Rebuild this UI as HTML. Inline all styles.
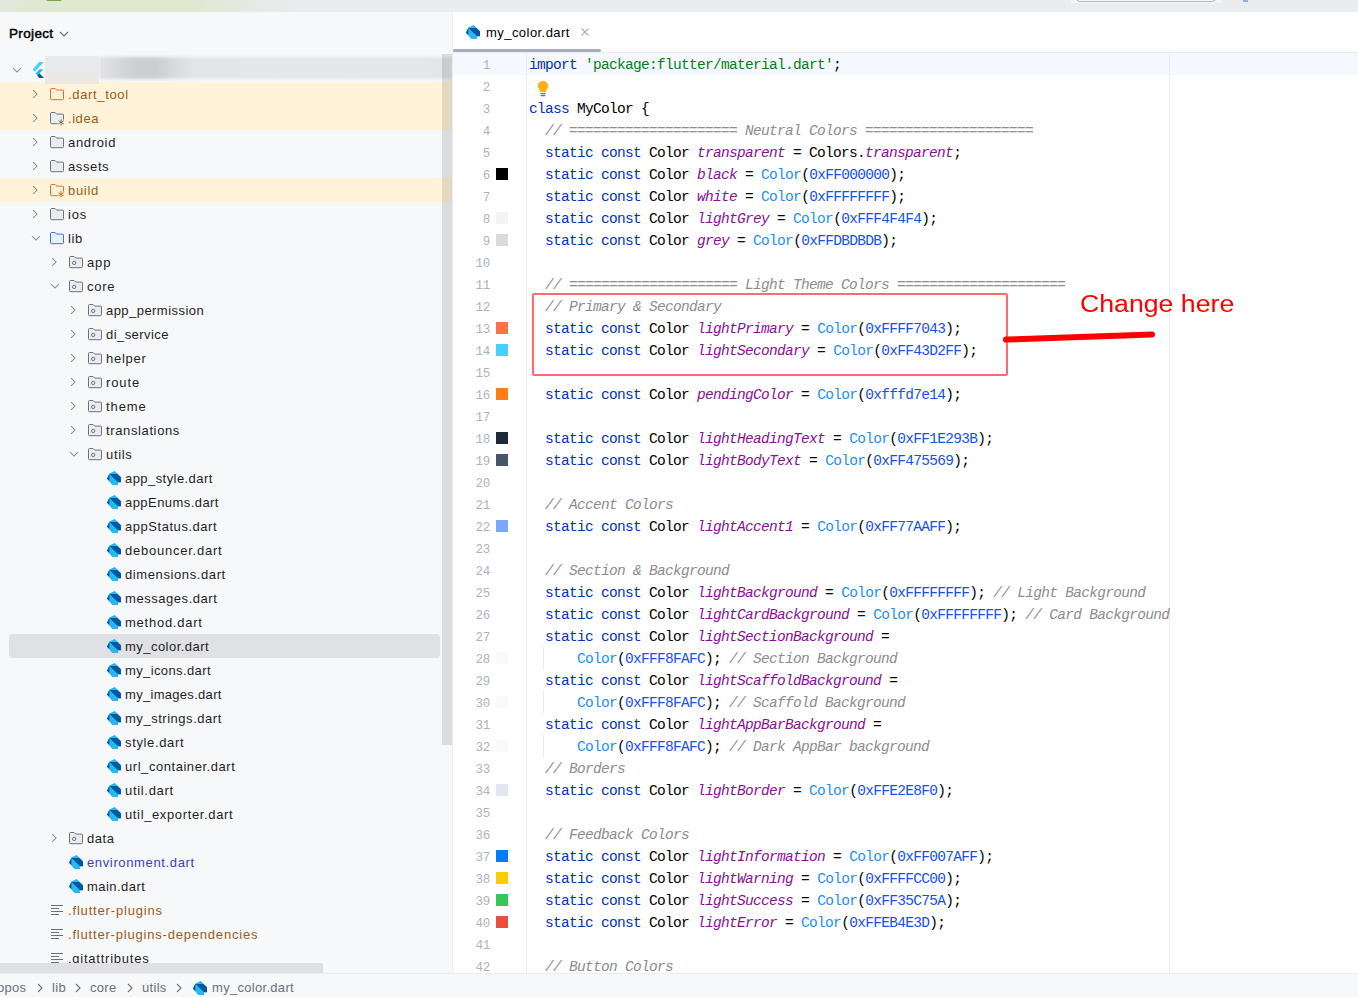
<!DOCTYPE html>
<html><head><meta charset="utf-8"><style>
*{margin:0;padding:0;box-sizing:border-box}
html,body{width:1358px;height:997px;overflow:hidden;background:#fff;font-family:"Liberation Sans",sans-serif;position:relative}
div,svg{position:absolute}
.row{left:0;width:452px;height:24px}
.row.yel{background:#FFF4D9}
.selrow{left:9px;width:431px;height:24px;background:#DFE1E5;border-radius:4px}
.tt{height:24px;line-height:24px;font-size:13px;letter-spacing:0.45px;white-space:nowrap}
.ln{left:529px;height:22px;line-height:22px;font-family:"Liberation Mono",monospace;font-size:14.5px;letter-spacing:-0.7px;white-space:pre;color:#000}
.ln b{font-weight:normal}
.k{color:#0033B3} .s{color:#067D17} .c{color:#8C8C8C;font-style:italic} .f{color:#871094;font-style:italic} .ct{color:#1E8FF0} .n{color:#1750EB}
.num{left:453px;width:37px;text-align:right;height:22px;line-height:22px;font-family:"Liberation Mono",monospace;font-size:12.5px;letter-spacing:-0.3px;color:#AEB3C2}
.sw{left:496px;width:12px;height:12px}
.bc{top:977px;height:22px;line-height:22px;font-size:13px;letter-spacing:0.3px;color:#6C707E;white-space:nowrap}
</style></head><body>
<!-- top toolbar -->
<div style="left:0;top:0;width:1358px;height:12px;background:#EBECF0"></div>
<div style="left:0;top:0;width:320px;height:12px;background:linear-gradient(90deg,#E3E7DF 0px,#DFE8D0 35px,#DFE8D1 190px,#E6EAE4 250px,#EBECF0 310px)"></div>
<div style="left:46px;top:-3px;width:16px;height:4px;background:#7FA34A;border-radius:2px"></div>
<div style="left:1071px;top:0;width:150px;height:3px;background:#F4F5F7"></div>
<div style="left:1076px;top:-10px;width:140px;height:12px;border:1px solid #B4B7C0;border-radius:4px"></div>
<div style="left:1243px;top:0;width:5px;height:2px;background:#8FB0E0"></div>

<!-- left panel -->
<div style="left:0;top:12px;width:452px;height:961px;background:#F7F8FA"></div>
<div class="tt" style="left:9px;top:22px;font-size:13.5px;letter-spacing:0.35px;color:#000;-webkit-text-stroke:0.45px #000">Project</div>
<svg style="left:59px;top:30px" width="10" height="8" viewBox="0 0 10 8"><path d="M1 2l4 4 4-4" fill="none" stroke="#6C707E" stroke-width="1.1"/></svg>
<!-- root row -->
<svg style="left:12px;top:66px" width="10" height="8" viewBox="0 0 10 8"><path d="M1 2l4 4 4-4" fill="none" stroke="#7E8290" stroke-width="1.05"/></svg>
<svg style="left:32px;top:61px" width="13" height="18" viewBox="32 61 13 18"><path d="M39.2 62H44L34.6 71.7L32.6 69.6Z" fill="#44D1FD"/><path d="M39.7 69.2H43.4L39.4 73.4L37.3 75.3L35.5 73.4Z" fill="#1FBCFD"/><path d="M37.3 75.3L39.4 73.2L44 78H39.3Z" fill="#02569B"/></svg>
<div style="left:99px;top:57px;width:353px;height:22px;background:linear-gradient(90deg,#E2E3E7 0px,#D8D9DD 18px,#CDCED2 38px,#CDCED2 58px,#D9DADE 75px,#E3E4E8 95px,#E6E7EB 200px,#E4E5E9 353px);filter:blur(1.5px)"></div>
<div class="row yel" style="top:82px"></div><svg style="left:31px;top:89px" width="8" height="10" viewBox="0 0 8 10"><path d="M2 1l4 4-4 4" fill="none" stroke="#7E8290" stroke-width="1.05"/></svg><svg style="left:49px;top:87px" width="16" height="16" viewBox="0 0 16 16"><path d="M1.5 2.5a1 1 0 0 1 1-1h3.6l1.6 1.6h5.8a1 1 0 0 1 1 1v7.6a1 1 0 0 1-1 1h-11a1 1 0 0 1-1-1z" fill="#FFF0DE" stroke="#E66D17" stroke-width="1"/></svg><div class="tt" style="left:68px;top:83px;color:#9E5B17;letter-spacing:0.661px">.dart_tool</div><div class="row yel" style="top:106px"></div><svg style="left:31px;top:113px" width="8" height="10" viewBox="0 0 8 10"><path d="M2 1l4 4-4 4" fill="none" stroke="#7E8290" stroke-width="1.05"/></svg><svg style="left:49px;top:111px" width="16" height="16" viewBox="0 0 16 16"><path d="M1.5 2.5a1 1 0 0 1 1-1h3.6l1.6 1.6h5.8a1 1 0 0 1 1 1v7.6a1 1 0 0 1-1 1h-11a1 1 0 0 1-1-1z" fill="#EBECF0" stroke="#6C707E" stroke-width="1"/><circle cx="12.1" cy="11.3" r="3.6" fill="#FFF4D9"/><path d="M12.1 8.1v6.4M9.4 9.7l5.4 3.2M9.4 12.9l5.4-3.2" stroke="#6C707E" stroke-width="1" fill="none"/></svg><div class="tt" style="left:68px;top:107px;color:#9E5B17;letter-spacing:0.55px">.idea</div><svg style="left:31px;top:137px" width="8" height="10" viewBox="0 0 8 10"><path d="M2 1l4 4-4 4" fill="none" stroke="#7E8290" stroke-width="1.05"/></svg><svg style="left:49px;top:135px" width="16" height="16" viewBox="0 0 16 16"><path d="M1.5 2.5a1 1 0 0 1 1-1h3.6l1.6 1.6h5.8a1 1 0 0 1 1 1v7.6a1 1 0 0 1-1 1h-11a1 1 0 0 1-1-1z" fill="#EBECF0" stroke="#6C707E" stroke-width="1"/></svg><div class="tt" style="left:68px;top:131px;color:#1E1F22;letter-spacing:0.667px">android</div><svg style="left:31px;top:161px" width="8" height="10" viewBox="0 0 8 10"><path d="M2 1l4 4-4 4" fill="none" stroke="#7E8290" stroke-width="1.05"/></svg><svg style="left:49px;top:159px" width="16" height="16" viewBox="0 0 16 16"><path d="M1.5 2.5a1 1 0 0 1 1-1h3.6l1.6 1.6h5.8a1 1 0 0 1 1 1v7.6a1 1 0 0 1-1 1h-11a1 1 0 0 1-1-1z" fill="#EBECF0" stroke="#6C707E" stroke-width="1"/></svg><div class="tt" style="left:68px;top:155px;color:#1E1F22;letter-spacing:0.61px">assets</div><div class="row yel" style="top:178px"></div><svg style="left:31px;top:185px" width="8" height="10" viewBox="0 0 8 10"><path d="M2 1l4 4-4 4" fill="none" stroke="#7E8290" stroke-width="1.05"/></svg><svg style="left:49px;top:183px" width="16" height="16" viewBox="0 0 16 16"><path d="M1.5 2.5a1 1 0 0 1 1-1h3.6l1.6 1.6h5.8a1 1 0 0 1 1 1v7.6a1 1 0 0 1-1 1h-11a1 1 0 0 1-1-1z" fill="#FFF0DE" stroke="#E66D17" stroke-width="1"/><circle cx="12.1" cy="11.3" r="3.6" fill="#FFF4D9"/><path d="M12.1 8.1v6.4M9.4 9.7l5.4 3.2M9.4 12.9l5.4-3.2" stroke="#E66D17" stroke-width="1" fill="none"/></svg><div class="tt" style="left:68px;top:179px;color:#9E5B17;letter-spacing:0.7px">build</div><svg style="left:31px;top:209px" width="8" height="10" viewBox="0 0 8 10"><path d="M2 1l4 4-4 4" fill="none" stroke="#7E8290" stroke-width="1.05"/></svg><svg style="left:49px;top:207px" width="16" height="16" viewBox="0 0 16 16"><path d="M1.5 2.5a1 1 0 0 1 1-1h3.6l1.6 1.6h5.8a1 1 0 0 1 1 1v7.6a1 1 0 0 1-1 1h-11a1 1 0 0 1-1-1z" fill="#EBECF0" stroke="#6C707E" stroke-width="1"/></svg><div class="tt" style="left:68px;top:203px;color:#1E1F22;letter-spacing:0.8px">ios</div><svg style="left:31px;top:234px" width="10" height="8" viewBox="0 0 10 8"><path d="M1 2l4 4 4-4" fill="none" stroke="#7E8290" stroke-width="1.05"/></svg><svg style="left:49px;top:231px" width="16" height="16" viewBox="0 0 16 16"><path d="M1.5 2.5a1 1 0 0 1 1-1h3.6l1.6 1.6h5.8a1 1 0 0 1 1 1v7.6a1 1 0 0 1-1 1h-11a1 1 0 0 1-1-1z" fill="#E7EFFD" stroke="#3574F0" stroke-width="1"/></svg><div class="tt" style="left:68px;top:227px;color:#1E1F22;letter-spacing:0.55px">lib</div><svg style="left:50px;top:257px" width="8" height="10" viewBox="0 0 8 10"><path d="M2 1l4 4-4 4" fill="none" stroke="#7E8290" stroke-width="1.05"/></svg><svg style="left:68px;top:255px" width="16" height="16" viewBox="0 0 16 16"><path d="M1.5 2.5a1 1 0 0 1 1-1h3.6l1.6 1.6h5.8a1 1 0 0 1 1 1v7.6a1 1 0 0 1-1 1h-11a1 1 0 0 1-1-1z" fill="#EBECF0" stroke="#6C707E" stroke-width="1"/><circle cx="6.2" cy="7.9" r="1.7" fill="none" stroke="#6C707E" stroke-width="1"/></svg><div class="tt" style="left:87px;top:251px;color:#1E1F22;letter-spacing:0.85px">app</div><svg style="left:50px;top:282px" width="10" height="8" viewBox="0 0 10 8"><path d="M1 2l4 4 4-4" fill="none" stroke="#7E8290" stroke-width="1.05"/></svg><svg style="left:68px;top:279px" width="16" height="16" viewBox="0 0 16 16"><path d="M1.5 2.5a1 1 0 0 1 1-1h3.6l1.6 1.6h5.8a1 1 0 0 1 1 1v7.6a1 1 0 0 1-1 1h-11a1 1 0 0 1-1-1z" fill="#EBECF0" stroke="#6C707E" stroke-width="1"/><circle cx="6.2" cy="7.9" r="1.7" fill="none" stroke="#6C707E" stroke-width="1"/></svg><div class="tt" style="left:87px;top:275px;color:#1E1F22;letter-spacing:0.717px">core</div><svg style="left:69px;top:305px" width="8" height="10" viewBox="0 0 8 10"><path d="M2 1l4 4-4 4" fill="none" stroke="#7E8290" stroke-width="1.05"/></svg><svg style="left:87px;top:303px" width="16" height="16" viewBox="0 0 16 16"><path d="M1.5 2.5a1 1 0 0 1 1-1h3.6l1.6 1.6h5.8a1 1 0 0 1 1 1v7.6a1 1 0 0 1-1 1h-11a1 1 0 0 1-1-1z" fill="#EBECF0" stroke="#6C707E" stroke-width="1"/><circle cx="6.2" cy="7.9" r="1.7" fill="none" stroke="#6C707E" stroke-width="1"/></svg><div class="tt" style="left:106px;top:299px;color:#1E1F22;letter-spacing:0.45px">app_permission</div><svg style="left:69px;top:329px" width="8" height="10" viewBox="0 0 8 10"><path d="M2 1l4 4-4 4" fill="none" stroke="#7E8290" stroke-width="1.05"/></svg><svg style="left:87px;top:327px" width="16" height="16" viewBox="0 0 16 16"><path d="M1.5 2.5a1 1 0 0 1 1-1h3.6l1.6 1.6h5.8a1 1 0 0 1 1 1v7.6a1 1 0 0 1-1 1h-11a1 1 0 0 1-1-1z" fill="#EBECF0" stroke="#6C707E" stroke-width="1"/><circle cx="6.2" cy="7.9" r="1.7" fill="none" stroke="#6C707E" stroke-width="1"/></svg><div class="tt" style="left:106px;top:323px;color:#1E1F22;letter-spacing:0.439px">di_service</div><svg style="left:69px;top:353px" width="8" height="10" viewBox="0 0 8 10"><path d="M2 1l4 4-4 4" fill="none" stroke="#7E8290" stroke-width="1.05"/></svg><svg style="left:87px;top:351px" width="16" height="16" viewBox="0 0 16 16"><path d="M1.5 2.5a1 1 0 0 1 1-1h3.6l1.6 1.6h5.8a1 1 0 0 1 1 1v7.6a1 1 0 0 1-1 1h-11a1 1 0 0 1-1-1z" fill="#EBECF0" stroke="#6C707E" stroke-width="1"/><circle cx="6.2" cy="7.9" r="1.7" fill="none" stroke="#6C707E" stroke-width="1"/></svg><div class="tt" style="left:106px;top:347px;color:#1E1F22;letter-spacing:0.73px">helper</div><svg style="left:69px;top:377px" width="8" height="10" viewBox="0 0 8 10"><path d="M2 1l4 4-4 4" fill="none" stroke="#7E8290" stroke-width="1.05"/></svg><svg style="left:87px;top:375px" width="16" height="16" viewBox="0 0 16 16"><path d="M1.5 2.5a1 1 0 0 1 1-1h3.6l1.6 1.6h5.8a1 1 0 0 1 1 1v7.6a1 1 0 0 1-1 1h-11a1 1 0 0 1-1-1z" fill="#EBECF0" stroke="#6C707E" stroke-width="1"/><circle cx="6.2" cy="7.9" r="1.7" fill="none" stroke="#6C707E" stroke-width="1"/></svg><div class="tt" style="left:106px;top:371px;color:#1E1F22;letter-spacing:0.9px">route</div><svg style="left:69px;top:401px" width="8" height="10" viewBox="0 0 8 10"><path d="M2 1l4 4-4 4" fill="none" stroke="#7E8290" stroke-width="1.05"/></svg><svg style="left:87px;top:399px" width="16" height="16" viewBox="0 0 16 16"><path d="M1.5 2.5a1 1 0 0 1 1-1h3.6l1.6 1.6h5.8a1 1 0 0 1 1 1v7.6a1 1 0 0 1-1 1h-11a1 1 0 0 1-1-1z" fill="#EBECF0" stroke="#6C707E" stroke-width="1"/><circle cx="6.2" cy="7.9" r="1.7" fill="none" stroke="#6C707E" stroke-width="1"/></svg><div class="tt" style="left:106px;top:395px;color:#1E1F22;letter-spacing:0.9px">theme</div><svg style="left:69px;top:425px" width="8" height="10" viewBox="0 0 8 10"><path d="M2 1l4 4-4 4" fill="none" stroke="#7E8290" stroke-width="1.05"/></svg><svg style="left:87px;top:423px" width="16" height="16" viewBox="0 0 16 16"><path d="M1.5 2.5a1 1 0 0 1 1-1h3.6l1.6 1.6h5.8a1 1 0 0 1 1 1v7.6a1 1 0 0 1-1 1h-11a1 1 0 0 1-1-1z" fill="#EBECF0" stroke="#6C707E" stroke-width="1"/><circle cx="6.2" cy="7.9" r="1.7" fill="none" stroke="#6C707E" stroke-width="1"/></svg><div class="tt" style="left:106px;top:419px;color:#1E1F22;letter-spacing:0.623px">translations</div><svg style="left:69px;top:450px" width="10" height="8" viewBox="0 0 10 8"><path d="M1 2l4 4 4-4" fill="none" stroke="#7E8290" stroke-width="1.05"/></svg><svg style="left:87px;top:447px" width="16" height="16" viewBox="0 0 16 16"><path d="M1.5 2.5a1 1 0 0 1 1-1h3.6l1.6 1.6h5.8a1 1 0 0 1 1 1v7.6a1 1 0 0 1-1 1h-11a1 1 0 0 1-1-1z" fill="#EBECF0" stroke="#6C707E" stroke-width="1"/><circle cx="6.2" cy="7.9" r="1.7" fill="none" stroke="#6C707E" stroke-width="1"/></svg><div class="tt" style="left:106px;top:443px;color:#1E1F22;letter-spacing:0.675px">utils</div><svg style="left:107px;top:471px" width="14" height="14" viewBox="0 0 14 14"><path d="M7.6 0L14 5.9V11.2H11.1V14H5.4L0 7.8L2.5 2.5Z" fill="#29B6F6"/><path d="M2.5 3.1H10.2L14 6.4V11.2H11.1Z" fill="#01579B"/><path d="M2.5 2.6L0 7.8L2.3 10Z" fill="#01579B"/></svg><div class="tt" style="left:125px;top:467px;color:#1E1F22;letter-spacing:0.435px">app_style.dart</div><svg style="left:107px;top:495px" width="14" height="14" viewBox="0 0 14 14"><path d="M7.6 0L14 5.9V11.2H11.1V14H5.4L0 7.8L2.5 2.5Z" fill="#29B6F6"/><path d="M2.5 3.1H10.2L14 6.4V11.2H11.1Z" fill="#01579B"/><path d="M2.5 2.6L0 7.8L2.3 10Z" fill="#01579B"/></svg><div class="tt" style="left:125px;top:491px;color:#1E1F22;letter-spacing:0.442px">appEnums.dart</div><svg style="left:107px;top:519px" width="14" height="14" viewBox="0 0 14 14"><path d="M7.6 0L14 5.9V11.2H11.1V14H5.4L0 7.8L2.5 2.5Z" fill="#29B6F6"/><path d="M2.5 3.1H10.2L14 6.4V11.2H11.1Z" fill="#01579B"/><path d="M2.5 2.6L0 7.8L2.3 10Z" fill="#01579B"/></svg><div class="tt" style="left:125px;top:515px;color:#1E1F22;letter-spacing:0.542px">appStatus.dart</div><svg style="left:107px;top:543px" width="14" height="14" viewBox="0 0 14 14"><path d="M7.6 0L14 5.9V11.2H11.1V14H5.4L0 7.8L2.5 2.5Z" fill="#29B6F6"/><path d="M2.5 3.1H10.2L14 6.4V11.2H11.1Z" fill="#01579B"/><path d="M2.5 2.6L0 7.8L2.3 10Z" fill="#01579B"/></svg><div class="tt" style="left:125px;top:539px;color:#1E1F22;letter-spacing:0.758px">debouncer.dart</div><svg style="left:107px;top:567px" width="14" height="14" viewBox="0 0 14 14"><path d="M7.6 0L14 5.9V11.2H11.1V14H5.4L0 7.8L2.5 2.5Z" fill="#29B6F6"/><path d="M2.5 3.1H10.2L14 6.4V11.2H11.1Z" fill="#01579B"/><path d="M2.5 2.6L0 7.8L2.3 10Z" fill="#01579B"/></svg><div class="tt" style="left:125px;top:563px;color:#1E1F22;letter-spacing:0.6px">dimensions.dart</div><svg style="left:107px;top:591px" width="14" height="14" viewBox="0 0 14 14"><path d="M7.6 0L14 5.9V11.2H11.1V14H5.4L0 7.8L2.5 2.5Z" fill="#29B6F6"/><path d="M2.5 3.1H10.2L14 6.4V11.2H11.1Z" fill="#01579B"/><path d="M2.5 2.6L0 7.8L2.3 10Z" fill="#01579B"/></svg><div class="tt" style="left:125px;top:587px;color:#1E1F22;letter-spacing:0.55px">messages.dart</div><svg style="left:107px;top:615px" width="14" height="14" viewBox="0 0 14 14"><path d="M7.6 0L14 5.9V11.2H11.1V14H5.4L0 7.8L2.5 2.5Z" fill="#29B6F6"/><path d="M2.5 3.1H10.2L14 6.4V11.2H11.1Z" fill="#01579B"/><path d="M2.5 2.6L0 7.8L2.3 10Z" fill="#01579B"/></svg><div class="tt" style="left:125px;top:611px;color:#1E1F22;letter-spacing:0.75px">method.dart</div><div class="selrow" style="top:634px"></div><svg style="left:107px;top:639px" width="14" height="14" viewBox="0 0 14 14"><path d="M7.6 0L14 5.9V11.2H11.1V14H5.4L0 7.8L2.5 2.5Z" fill="#29B6F6"/><path d="M2.5 3.1H10.2L14 6.4V11.2H11.1Z" fill="#01579B"/><path d="M2.5 2.6L0 7.8L2.3 10Z" fill="#01579B"/></svg><div class="tt" style="left:125px;top:635px;color:#1E1F22;letter-spacing:0.467px">my_color.dart</div><svg style="left:107px;top:663px" width="14" height="14" viewBox="0 0 14 14"><path d="M7.6 0L14 5.9V11.2H11.1V14H5.4L0 7.8L2.5 2.5Z" fill="#29B6F6"/><path d="M2.5 3.1H10.2L14 6.4V11.2H11.1Z" fill="#01579B"/><path d="M2.5 2.6L0 7.8L2.3 10Z" fill="#01579B"/></svg><div class="tt" style="left:125px;top:659px;color:#1E1F22;letter-spacing:0.383px">my_icons.dart</div><svg style="left:107px;top:687px" width="14" height="14" viewBox="0 0 14 14"><path d="M7.6 0L14 5.9V11.2H11.1V14H5.4L0 7.8L2.5 2.5Z" fill="#29B6F6"/><path d="M2.5 3.1H10.2L14 6.4V11.2H11.1Z" fill="#01579B"/><path d="M2.5 2.6L0 7.8L2.3 10Z" fill="#01579B"/></svg><div class="tt" style="left:125px;top:683px;color:#1E1F22;letter-spacing:0.3px">my_images.dart</div><svg style="left:107px;top:711px" width="14" height="14" viewBox="0 0 14 14"><path d="M7.6 0L14 5.9V11.2H11.1V14H5.4L0 7.8L2.5 2.5Z" fill="#29B6F6"/><path d="M2.5 3.1H10.2L14 6.4V11.2H11.1Z" fill="#01579B"/><path d="M2.5 2.6L0 7.8L2.3 10Z" fill="#01579B"/></svg><div class="tt" style="left:125px;top:707px;color:#1E1F22;letter-spacing:0.529px">my_strings.dart</div><svg style="left:107px;top:735px" width="14" height="14" viewBox="0 0 14 14"><path d="M7.6 0L14 5.9V11.2H11.1V14H5.4L0 7.8L2.5 2.5Z" fill="#29B6F6"/><path d="M2.5 3.1H10.2L14 6.4V11.2H11.1Z" fill="#01579B"/><path d="M2.5 2.6L0 7.8L2.3 10Z" fill="#01579B"/></svg><div class="tt" style="left:125px;top:731px;color:#1E1F22;letter-spacing:0.65px">style.dart</div><svg style="left:107px;top:759px" width="14" height="14" viewBox="0 0 14 14"><path d="M7.6 0L14 5.9V11.2H11.1V14H5.4L0 7.8L2.5 2.5Z" fill="#29B6F6"/><path d="M2.5 3.1H10.2L14 6.4V11.2H11.1Z" fill="#01579B"/><path d="M2.5 2.6L0 7.8L2.3 10Z" fill="#01579B"/></svg><div class="tt" style="left:125px;top:755px;color:#1E1F22;letter-spacing:0.55px">url_container.dart</div><svg style="left:107px;top:783px" width="14" height="14" viewBox="0 0 14 14"><path d="M7.6 0L14 5.9V11.2H11.1V14H5.4L0 7.8L2.5 2.5Z" fill="#29B6F6"/><path d="M2.5 3.1H10.2L14 6.4V11.2H11.1Z" fill="#01579B"/><path d="M2.5 2.6L0 7.8L2.3 10Z" fill="#01579B"/></svg><div class="tt" style="left:125px;top:779px;color:#1E1F22;letter-spacing:0.687px">util.dart</div><svg style="left:107px;top:807px" width="14" height="14" viewBox="0 0 14 14"><path d="M7.6 0L14 5.9V11.2H11.1V14H5.4L0 7.8L2.5 2.5Z" fill="#29B6F6"/><path d="M2.5 3.1H10.2L14 6.4V11.2H11.1Z" fill="#01579B"/><path d="M2.5 2.6L0 7.8L2.3 10Z" fill="#01579B"/></svg><div class="tt" style="left:125px;top:803px;color:#1E1F22;letter-spacing:0.632px">util_exporter.dart</div><svg style="left:50px;top:833px" width="8" height="10" viewBox="0 0 8 10"><path d="M2 1l4 4-4 4" fill="none" stroke="#7E8290" stroke-width="1.05"/></svg><svg style="left:68px;top:831px" width="16" height="16" viewBox="0 0 16 16"><path d="M1.5 2.5a1 1 0 0 1 1-1h3.6l1.6 1.6h5.8a1 1 0 0 1 1 1v7.6a1 1 0 0 1-1 1h-11a1 1 0 0 1-1-1z" fill="#EBECF0" stroke="#6C707E" stroke-width="1"/><circle cx="6.2" cy="7.9" r="1.7" fill="none" stroke="#6C707E" stroke-width="1"/></svg><div class="tt" style="left:87px;top:827px;color:#1E1F22;letter-spacing:0.55px">data</div><svg style="left:69px;top:855px" width="14" height="14" viewBox="0 0 14 14"><path d="M7.6 0L14 5.9V11.2H11.1V14H5.4L0 7.8L2.5 2.5Z" fill="#29B6F6"/><path d="M2.5 3.1H10.2L14 6.4V11.2H11.1Z" fill="#01579B"/><path d="M2.5 2.6L0 7.8L2.3 10Z" fill="#01579B"/></svg><div class="tt" style="left:87px;top:851px;color:#3A3FBF;letter-spacing:0.637px">environment.dart</div><svg style="left:69px;top:879px" width="14" height="14" viewBox="0 0 14 14"><path d="M7.6 0L14 5.9V11.2H11.1V14H5.4L0 7.8L2.5 2.5Z" fill="#29B6F6"/><path d="M2.5 3.1H10.2L14 6.4V11.2H11.1Z" fill="#01579B"/><path d="M2.5 2.6L0 7.8L2.3 10Z" fill="#01579B"/></svg><div class="tt" style="left:87px;top:875px;color:#1E1F22;letter-spacing:0.45px">main.dart</div><svg style="left:49px;top:903px" width="16" height="16" viewBox="0 0 16 16"><path d="M2 2.5h12M2 5.5h8M2 8.5h12M2 11.5h8" stroke="#6C707E" stroke-width="1"/></svg><div class="tt" style="left:68px;top:899px;color:#9E5B17;letter-spacing:0.83px">.flutter-plugins</div><svg style="left:49px;top:927px" width="16" height="16" viewBox="0 0 16 16"><path d="M2 2.5h12M2 5.5h8M2 8.5h12M2 11.5h8" stroke="#6C707E" stroke-width="1"/></svg><div class="tt" style="left:68px;top:923px;color:#9E5B17;letter-spacing:0.804px">.flutter-plugins-dependencies</div><svg style="left:49px;top:951px" width="16" height="16" viewBox="0 0 16 16"><path d="M2 2.5h12M2 5.5h8M2 8.5h12M2 11.5h8" stroke="#6C707E" stroke-width="1"/></svg><div class="tt" style="left:68px;top:947px;color:#1E1F22;letter-spacing:0.758px">.gitattributes</div>
<div style="left:45px;top:56px;width:54px;height:28px;background:linear-gradient(180deg,#E8E9ED 0%,#E9E9EA 50%,#EDE8DC 100%)"></div>
<div style="left:442px;top:54px;width:10px;height:691px;background:rgba(0,0,0,0.11)"></div>
<div style="left:0;top:963px;width:323px;height:10px;background:#DFE0E3"></div>
<div style="left:452px;top:12px;width:1px;height:961px;background:#EBECF0"></div>

<!-- editor -->
<div style="left:453px;top:53px;width:905px;height:22px;background:#F5F8FE"></div>
<div style="left:453px;top:52px;width:905px;height:1px;background:#EBECF0"></div>
<div style="left:526px;top:53px;width:1px;height:920px;background:#EBECF0"></div>
<div style="left:1169px;top:53px;width:1px;height:920px;background:#EBECF0"></div>
<!-- tab -->
<svg style="left:466px;top:25px" width="14" height="14" viewBox="0 0 14 14"><path d="M7.6 0L14 5.9V11.2H11.1V14H5.4L0 7.8L2.5 2.5Z" fill="#29B6F6"/><path d="M2.5 3.1H10.2L14 6.4V11.2H11.1Z" fill="#01579B"/><path d="M2.5 2.6L0 7.8L2.3 10Z" fill="#01579B"/></svg>
<div style="left:486px;top:21px;height:24px;line-height:24px;font-size:13px;letter-spacing:0.45px;color:#000;white-space:nowrap">my_color.dart</div>
<svg style="left:580px;top:27px" width="10" height="10" viewBox="0 0 10 10"><path d="M1.5 1.5l7 7M8.5 1.5l-7 7" stroke="#A8ADBD" stroke-width="1.1"/></svg>
<div style="left:453px;top:49px;width:148px;height:3px;background:#A8ADBD;border-radius:2px"></div>
<div class="num" style="top:55px">1</div><div class="num" style="top:77px">2</div><div class="num" style="top:99px">3</div><div class="num" style="top:121px">4</div><div class="num" style="top:143px">5</div><div class="num" style="top:165px">6</div><div class="sw" style="top:168px;background:#000000"></div><div class="num" style="top:187px">7</div><div class="num" style="top:209px">8</div><div class="sw" style="top:212px;background:#F4F4F4"></div><div class="num" style="top:231px">9</div><div class="sw" style="top:234px;background:#DBDBDB"></div><div class="num" style="top:253px">10</div><div class="num" style="top:275px">11</div><div class="num" style="top:297px">12</div><div class="num" style="top:319px">13</div><div class="sw" style="top:322px;background:#FF7043"></div><div class="num" style="top:341px">14</div><div class="sw" style="top:344px;background:#43D2FF"></div><div class="num" style="top:363px">15</div><div class="num" style="top:385px">16</div><div class="sw" style="top:388px;background:#fd7e14"></div><div class="num" style="top:407px">17</div><div class="num" style="top:429px">18</div><div class="sw" style="top:432px;background:#1E293B"></div><div class="num" style="top:451px">19</div><div class="sw" style="top:454px;background:#475569"></div><div class="num" style="top:473px">20</div><div class="num" style="top:495px">21</div><div class="num" style="top:517px">22</div><div class="sw" style="top:520px;background:#77AAFF"></div><div class="num" style="top:539px">23</div><div class="num" style="top:561px">24</div><div class="num" style="top:583px">25</div><div class="num" style="top:605px">26</div><div class="num" style="top:627px">27</div><div class="num" style="top:649px">28</div><div class="sw" style="top:652px;background:#F8FAFC"></div><div class="num" style="top:671px">29</div><div class="num" style="top:693px">30</div><div class="sw" style="top:696px;background:#F8FAFC"></div><div class="num" style="top:715px">31</div><div class="num" style="top:737px">32</div><div class="sw" style="top:740px;background:#F8FAFC"></div><div class="num" style="top:759px">33</div><div class="num" style="top:781px">34</div><div class="sw" style="top:784px;background:#E2E8F0"></div><div class="num" style="top:803px">35</div><div class="num" style="top:825px">36</div><div class="num" style="top:847px">37</div><div class="sw" style="top:850px;background:#007AFF"></div><div class="num" style="top:869px">38</div><div class="sw" style="top:872px;background:#FFCC00"></div><div class="num" style="top:891px">39</div><div class="sw" style="top:894px;background:#35C75A"></div><div class="num" style="top:913px">40</div><div class="sw" style="top:916px;background:#EB4E3D"></div><div class="num" style="top:935px">41</div><div class="num" style="top:957px">42</div><div style="left:543px;top:647px;width:1px;height:22px;background:#E6E6EE"></div><div style="left:543px;top:691px;width:1px;height:22px;background:#E6E6EE"></div><div style="left:543px;top:735px;width:1px;height:22px;background:#E6E6EE"></div>
<div class="ln" style="top:54px"><b class="k">import</b> <b class="s">&#x27;package:flutter/material.dart&#x27;</b>;</div><div class="ln" style="top:98px"><b class="k">class</b> MyColor {</div><div class="ln" style="top:120px">  <i class="c">// ===================== Neutral Colors =====================</i></div><div class="ln" style="top:142px">  <b class="k">static</b> <b class="k">const</b> Color <i class="f">transparent</i> = Colors.<i class="f">transparent</i>;</div><div class="ln" style="top:164px">  <b class="k">static</b> <b class="k">const</b> Color <i class="f">black</i> = <b class="ct">Color</b>(<b class="n">0xFF000000</b>);</div><div class="ln" style="top:186px">  <b class="k">static</b> <b class="k">const</b> Color <i class="f">white</i> = <b class="ct">Color</b>(<b class="n">0xFFFFFFFF</b>);</div><div class="ln" style="top:208px">  <b class="k">static</b> <b class="k">const</b> Color <i class="f">lightGrey</i> = <b class="ct">Color</b>(<b class="n">0xFFF4F4F4</b>);</div><div class="ln" style="top:230px">  <b class="k">static</b> <b class="k">const</b> Color <i class="f">grey</i> = <b class="ct">Color</b>(<b class="n">0xFFDBDBDB</b>);</div><div class="ln" style="top:274px">  <i class="c">// ===================== Light Theme Colors =====================</i></div><div class="ln" style="top:296px">  <i class="c">// Primary &amp; Secondary</i></div><div class="ln" style="top:318px">  <b class="k">static</b> <b class="k">const</b> Color <i class="f">lightPrimary</i> = <b class="ct">Color</b>(<b class="n">0xFFFF7043</b>);</div><div class="ln" style="top:340px">  <b class="k">static</b> <b class="k">const</b> Color <i class="f">lightSecondary</i> = <b class="ct">Color</b>(<b class="n">0xFF43D2FF</b>);</div><div class="ln" style="top:384px">  <b class="k">static</b> <b class="k">const</b> Color <i class="f">pendingColor</i> = <b class="ct">Color</b>(<b class="n">0xfffd7e14</b>);</div><div class="ln" style="top:428px">  <b class="k">static</b> <b class="k">const</b> Color <i class="f">lightHeadingText</i> = <b class="ct">Color</b>(<b class="n">0xFF1E293B</b>);</div><div class="ln" style="top:450px">  <b class="k">static</b> <b class="k">const</b> Color <i class="f">lightBodyText</i> = <b class="ct">Color</b>(<b class="n">0xFF475569</b>);</div><div class="ln" style="top:494px">  <i class="c">// Accent Colors</i></div><div class="ln" style="top:516px">  <b class="k">static</b> <b class="k">const</b> Color <i class="f">lightAccent1</i> = <b class="ct">Color</b>(<b class="n">0xFF77AAFF</b>);</div><div class="ln" style="top:560px">  <i class="c">// Section &amp; Background</i></div><div class="ln" style="top:582px">  <b class="k">static</b> <b class="k">const</b> Color <i class="f">lightBackground</i> = <b class="ct">Color</b>(<b class="n">0xFFFFFFFF</b>); <i class="c">// Light Background</i></div><div class="ln" style="top:604px">  <b class="k">static</b> <b class="k">const</b> Color <i class="f">lightCardBackground</i> = <b class="ct">Color</b>(<b class="n">0xFFFFFFFF</b>); <i class="c">// Card Background</i></div><div class="ln" style="top:626px">  <b class="k">static</b> <b class="k">const</b> Color <i class="f">lightSectionBackground</i> =</div><div class="ln" style="top:648px">      <b class="ct">Color</b>(<b class="n">0xFFF8FAFC</b>); <i class="c">// Section Background</i></div><div class="ln" style="top:670px">  <b class="k">static</b> <b class="k">const</b> Color <i class="f">lightScaffoldBackground</i> =</div><div class="ln" style="top:692px">      <b class="ct">Color</b>(<b class="n">0xFFF8FAFC</b>); <i class="c">// Scaffold Background</i></div><div class="ln" style="top:714px">  <b class="k">static</b> <b class="k">const</b> Color <i class="f">lightAppBarBackground</i> =</div><div class="ln" style="top:736px">      <b class="ct">Color</b>(<b class="n">0xFFF8FAFC</b>); <i class="c">// Dark AppBar background</i></div><div class="ln" style="top:758px">  <i class="c">// Borders</i></div><div class="ln" style="top:780px">  <b class="k">static</b> <b class="k">const</b> Color <i class="f">lightBorder</i> = <b class="ct">Color</b>(<b class="n">0xFFE2E8F0</b>);</div><div class="ln" style="top:824px">  <i class="c">// Feedback Colors</i></div><div class="ln" style="top:846px">  <b class="k">static</b> <b class="k">const</b> Color <i class="f">lightInformation</i> = <b class="ct">Color</b>(<b class="n">0xFF007AFF</b>);</div><div class="ln" style="top:868px">  <b class="k">static</b> <b class="k">const</b> Color <i class="f">lightWarning</i> = <b class="ct">Color</b>(<b class="n">0xFFFFCC00</b>);</div><div class="ln" style="top:890px">  <b class="k">static</b> <b class="k">const</b> Color <i class="f">lightSuccess</i> = <b class="ct">Color</b>(<b class="n">0xFF35C75A</b>);</div><div class="ln" style="top:912px">  <b class="k">static</b> <b class="k">const</b> Color <i class="f">lightError</i> = <b class="ct">Color</b>(<b class="n">0xFFEB4E3D</b>);</div><div class="ln" style="top:956px">  <i class="c">// Button Colors</i></div>
<!-- lightbulb -->
<svg style="left:536px;top:80px" width="14" height="18" viewBox="0 0 14 18"><path d="M7 1C4 1 1.8 3.2 1.8 6c0 1.8 1 3 2 4v2h6.4v-2c1-1 2-2.2 2-4C12.2 3.2 10 1 7 1z" fill="#FFAF0F"/><path d="M4.8 13.6h4.4M5 15.6h4" stroke="#6C707E" stroke-width="1.1" stroke-linecap="round"/></svg>

<!-- annotation -->
<div style="left:532px;top:293px;width:476px;height:83px;border:2px solid #FF6B6B;border-radius:2px"></div>
<svg style="left:995px;top:325px" width="170" height="25" viewBox="995 325 170 25"><path d="M1006 339.6L1152 334.4" stroke="#FF0000" stroke-width="6" stroke-linecap="round"/></svg>
<div style="left:1080px;top:287px;height:34px;line-height:34px;font-size:23px;color:#FF0000;white-space:nowrap;transform:scaleX(1.16);transform-origin:0 0">Change here</div>

<!-- status bar -->
<div style="left:0;top:973px;width:1358px;height:24px;background:#F7F8FA"></div>
<div style="left:0;top:973px;width:1358px;height:1px;background:#EBECF0"></div>
<div class="bc" style="left:-3px">opos</div>
<svg style="left:36px;top:983px" width="8" height="10" viewBox="0 0 8 10"><path d="M2 1l4 4-4 4" fill="none" stroke="#6C707E" stroke-width="1.1"/></svg>
<div class="bc" style="left:52px">lib</div>
<svg style="left:74px;top:983px" width="8" height="10" viewBox="0 0 8 10"><path d="M2 1l4 4-4 4" fill="none" stroke="#6C707E" stroke-width="1.1"/></svg>
<div class="bc" style="left:90px">core</div>
<svg style="left:126px;top:983px" width="8" height="10" viewBox="0 0 8 10"><path d="M2 1l4 4-4 4" fill="none" stroke="#6C707E" stroke-width="1.1"/></svg>
<div class="bc" style="left:142px">utils</div>
<svg style="left:175px;top:983px" width="8" height="10" viewBox="0 0 8 10"><path d="M2 1l4 4-4 4" fill="none" stroke="#6C707E" stroke-width="1.1"/></svg>
<svg style="left:193px;top:981px" width="14" height="14" viewBox="0 0 14 14"><path d="M7.6 0L14 5.9V11.2H11.1V14H5.4L0 7.8L2.5 2.5Z" fill="#29B6F6"/><path d="M2.5 3.1H10.2L14 6.4V11.2H11.1Z" fill="#01579B"/><path d="M2.5 2.6L0 7.8L2.3 10Z" fill="#01579B"/></svg>
<div class="bc" style="left:212px">my_color.dart</div>
</body></html>
